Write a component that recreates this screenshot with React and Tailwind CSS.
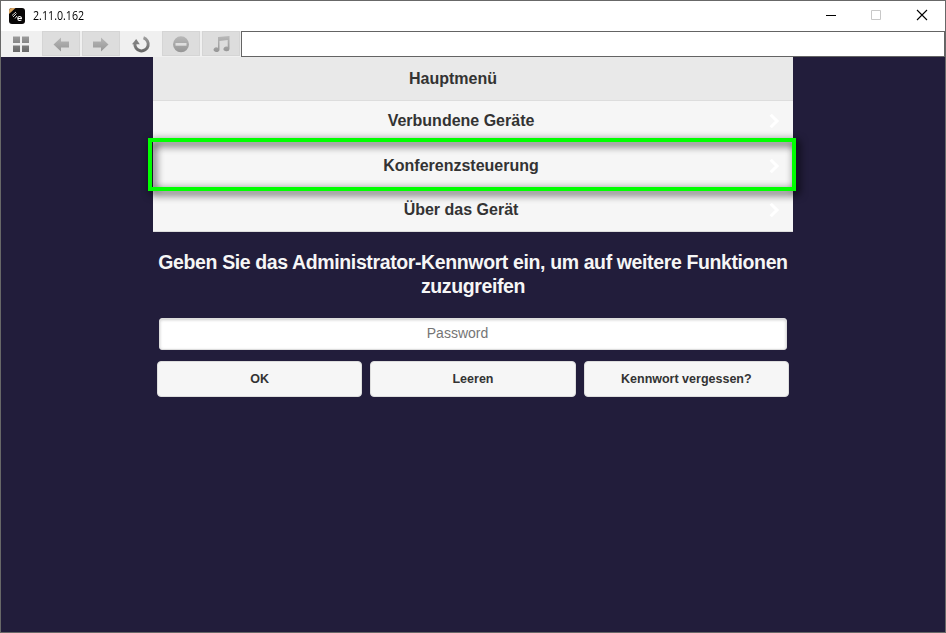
const rows = ['Verbundene Geräte', 'Konferenzsteuerung', 'Über das Gerät'];
const actions = ['OK', 'Leeren', 'Kennwort vergessen?'];

function AppIcon() {
  return (
    <svg className="block h-4 w-4" viewBox="0 0 16 16">
      <rect width="16" height="16" rx="3" fill="#080606" />
      <path d="M0 6V3a3 3 0 0 1 3-3h3.500z" fill="#d9a45f" />
      <path d="M3 7.500 7 4M4 9 7.500 5.500M6 10.500l2-2.500" stroke="#d8d8d8" strokeWidth="1" fill="none" />
      <path d="M8.800 10.500h3.600c.3-2.600-3.600-2.800-3.600 0 0 2.300 2.300 2.500 3.600 1.400" stroke="#fff" strokeWidth="1.100" fill="none" />
    </svg>
  );
}

function ToolButton({ framed, last, children }) {
  return (
    <div
      className={
        'flex h-[25px] items-center justify-center border ' +
        (last ? 'w-[38px] ' : 'mr-0.5 w-[38px] ') +
        (framed ? 'border-[#d5d5d5] bg-[#dddddd]' : 'border-transparent')
      }
    >
      <svg className="block h-6 w-6 shrink-0" viewBox="0 0 24 24">
        <defs>
          <linearGradient id="dark" x1="0" y1="0" x2="0" y2="1">
            <stop offset="0" stopColor="#9c9c9c" />
            <stop offset="1" stopColor="#686868" />
          </linearGradient>
          <linearGradient id="pale" x1="0" y1="0" x2="0" y2="1">
            <stop offset="0" stopColor="#b8b8b8" />
            <stop offset="1" stopColor="#969696" />
          </linearGradient>
        </defs>
        {children}
      </svg>
    </div>
  );
}

function Toolbar() {
  return (
    <div className="flex h-[26px] bg-[#f0f0f0]">
      <div className="flex w-60 shrink-0 items-start pl-px">
        <ToolButton>
          <path d="M4 4.500h7v6.500H4zM13 4.500h7v6.500h-7zM4 13.500h7V20H4zM13 13.500h7V20h-7z" fill="url(#dark)" />
        </ToolButton>
        <ToolButton framed>
          <path d="M4.500 12.500 12 5.500V9.500h8v6h-8v4z" fill="url(#pale)" />
        </ToolButton>
        <ToolButton framed>
          <path d="M19.500 12.500 12 5.500V9.500H4v6h8v4z" fill="url(#pale)" />
        </ToolButton>
        <ToolButton>
          <path d="M14.500 5.800a6.700 6.700 0 1 1-8.600 5.500" fill="none" stroke="url(#dark)" strokeWidth="3" />
          <path d="M3 12.200 7.200 7 10.800 12.200z" fill="#808080" />
        </ToolButton>
        <ToolButton framed>
          <circle cx="12" cy="12.300" r="8" fill="url(#pale)" />
          <path d="M6.500 11h11v2.700h-11z" fill="#dedede" />
        </ToolButton>
        <ToolButton framed last>
          <path
            d="M9 5 20.500 4v13a3 2.300 0 1 1-1.800-2.200V8L10.500 9v8.700a3 2.300 0 1 1-1.500-2z"
            fill="url(#pale)"
          />
        </ToolButton>
      </div>
      <div className="grow border border-[#646464] bg-white" />
    </div>
  );
}

function Chevron({ raised }) {
  return (
    <svg
      className={'absolute right-[13px] h-4 w-[11px] ' + (raised ? 'top-[12px]' : 'top-[14px]')}
      viewBox="0 0 11 16"
    >
      <path d="M1.700 1.700 8 8 1.700 14.300" fill="none" stroke="#ffffff" strokeWidth="3" />
    </svg>
  );
}

export default function App() {
  return (
    <div className="flex h-[633px] w-[946px] flex-col overflow-hidden border border-[#686868] bg-[#221d3b] font-['Liberation_Sans',Arial,sans-serif] text-[#333333]">
      <header className="flex h-[30px] shrink-0 items-center justify-between bg-white">
        <div className="flex items-center gap-2 pl-2">
          <AppIcon />
          <span className="origin-left scale-x-[0.89] font-['Open_Sans','Noto_Sans',sans-serif] text-xs text-black">
            2.11.0.162
          </span>
        </div>
        <svg className="block h-[30px] w-[138px]" viewBox="0 0 138 30">
          <path d="M19 14.500h10" stroke="#000" />
          <path d="M64.500 9.500h9v9h-9z" fill="none" stroke="#c8c8c8" />
          <path d="m110 9 10 10m0-10-10 10" stroke="#000" strokeWidth="1.100" />
        </svg>
      </header>
      <Toolbar />
      <main className="mx-auto flex w-[640px] flex-col">
        <nav className="relative text-center text-base font-bold">
          <h1 className="h-11 border-b border-[#dddddd] bg-[#e9e9e9] pr-10 leading-[43px]">Hauptmenü</h1>
          {rows.map((label, i) => (
            <div
              key={label}
              className={
                'relative bg-[#f6f6f6] pr-6 ' +
                (i === 0 ? 'h-[43px] leading-[39px]' : i === 1 ? 'h-11 leading-[43px]' : 'h-11 border-b border-[#dddddd] leading-[43px]')
              }
            >
              {label}
              <Chevron raised={i === 0} />
            </div>
          ))}
          <div className="absolute top-[81px] -left-[5px] h-[53px] w-[648px] border-4 border-[#00ff00] drop-shadow-[3px_3px_4px_rgba(0,0,0,0.9)]" />
        </nav>
        <h2 className="mt-[18px] text-center text-[19.5px] leading-6 font-bold tracking-[-0.38px] text-[#f6f6f6]">
          Geben Sie das Administrator-Kennwort ein, um auf weitere Funktionen zuzugreifen
        </h2>
        <input
          type="password"
          placeholder="Password"
          className="mx-1.5 mt-5 h-8 rounded-[3px] border border-[#dddddd] bg-white pr-[31px] pb-0.5 text-center text-sm shadow-[inset_0_1px_3px_rgba(0,0,0,0.2)] placeholder:text-[#757575]"
        />
        <div className="mt-[11px] grid grid-cols-3 gap-2 px-1">
          {actions.map((label) => (
            <button
              key={label}
              className="h-9 rounded-[4px] border border-[#dddddd] bg-[#f6f6f6] text-[12.5px] font-bold"
            >
              {label}
            </button>
          ))}
        </div>
      </main>
    </div>
  );
}
